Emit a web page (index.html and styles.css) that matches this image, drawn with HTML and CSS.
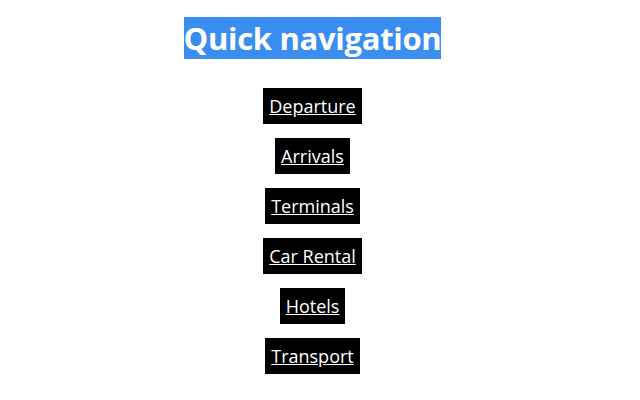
FILE: index.html
```html
<!DOCTYPE html>
<html lang="en">
<head>
<meta charset="utf-8">
<title>Quick navigation</title>
<link rel="stylesheet" href="styles.css">
</head>
<body>
<main class="page">
  <h1 class="title"><span class="title-text">Quick navigation</span></h1>
  <nav class="quick-nav">
    <a class="nav-link" href="#departure">Departure</a>
    <a class="nav-link" href="#arrivals">Arrivals</a>
    <a class="nav-link" href="#terminals">Terminals</a>
    <a class="nav-link" href="#car-rental">Car Rental</a>
    <a class="nav-link" href="#hotels">Hotels</a>
    <a class="nav-link" href="#transport">Transport</a>
  </nav>
</main>
</body>
</html>
```
FILE: styles.css
```css
html, body {
  margin: 0;
  padding: 0;
  background: #ffffff;
}
body {
  padding: 17px 15px 0 0;
  font-family: "Open Sans", "Noto Sans", "DejaVu Sans", sans-serif;
}
.page {
  display: flex;
  flex-direction: column;
  align-items: center;
}
.title {
  margin: 0;
  font-size: 31px;
  font-weight: 700;
  line-height: 42px;
  color: #ffffff;
}
.title-text {
  display: inline-block;
  background: #3a8ef0;
  letter-spacing: -0.3px;
}
.quick-nav {
  margin-top: 29px;
  display: flex;
  flex-direction: column;
  align-items: center;
  gap: 14px;
}
.nav-link {
  display: block;
  background: #000000;
  color: #ffffff;
  font-size: 18px;
  line-height: 24px;
  padding: 6px 6px;
  text-decoration: underline;
}
```
